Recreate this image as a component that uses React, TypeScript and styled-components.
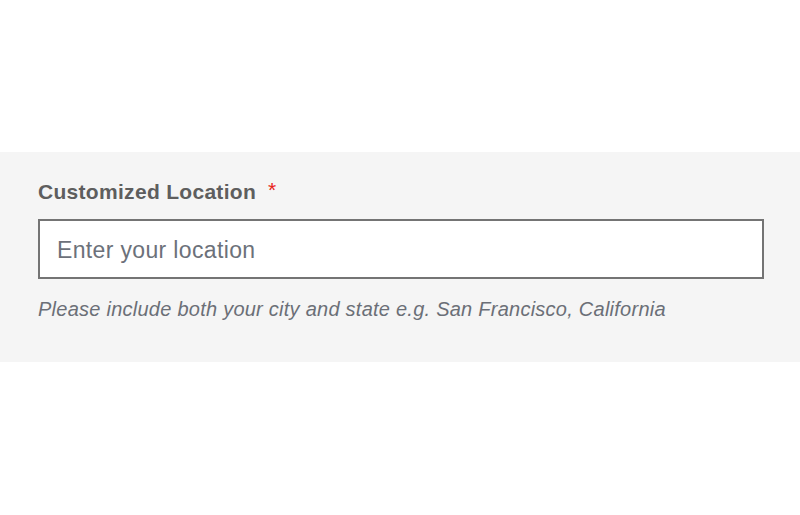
import React from "react";
import styled, { createGlobalStyle } from "styled-components";

const Global = createGlobalStyle`
  html, body { margin: 0; padding: 0; background: #ffffff; }
  body { font-family: "Liberation Sans", Arial, Helvetica, sans-serif; }
  * { box-sizing: border-box; }
`;

const Page = styled.div`
  width: 800px;
  height: 515px;
  padding-top: 152px;
  background: #ffffff;
`;

const Panel = styled.section`
  background: #f5f5f5;
  height: 210px;
  padding: 28px 36px 0 38px;
  display: flex;
  flex-direction: column;
`;

const Label = styled.label`
  display: flex;
  align-items: flex-start;
  gap: 12px;
  font-size: 21px;
  font-weight: 700;
  color: #5e5e5e;
  line-height: 24px;
  letter-spacing: 0.3px;
`;

const Required = styled.span`
  color: #e8231a;
  font-size: 21px;
  line-height: 20px;
  font-weight: 400;
`;

const Input = styled.input`
  margin-top: 15px;
  width: 726px;
  height: 60px;
  border: 2px solid #747474;
  border-radius: 0;
  background: #ffffff;
  padding: 3px 17px 0;
  font-family: "Liberation Sans", Arial, Helvetica, sans-serif;
  font-size: 23px;
  letter-spacing: 0.35px;
  color: #333;
  outline: none;
  &::placeholder {
    color: #6c717a;
    opacity: 1;
  }
`;

const Help = styled.p`
  margin: 18px 0 0 0;
  font-size: 20px;
  font-style: italic;
  letter-spacing: 0.25px;
  color: #6b6f77;
  line-height: 24px;
`;

export default function App() {
  return (
    <>
      <Global />
      <Page>
        <Panel>
          <Label htmlFor="loc">
            Customized Location<Required>*</Required>
          </Label>
          <Input id="loc" type="text" placeholder="Enter your location" />
          <Help>Please include both your city and state e.g. San Francisco, California</Help>
        </Panel>
      </Page>
    </>
  );
}
